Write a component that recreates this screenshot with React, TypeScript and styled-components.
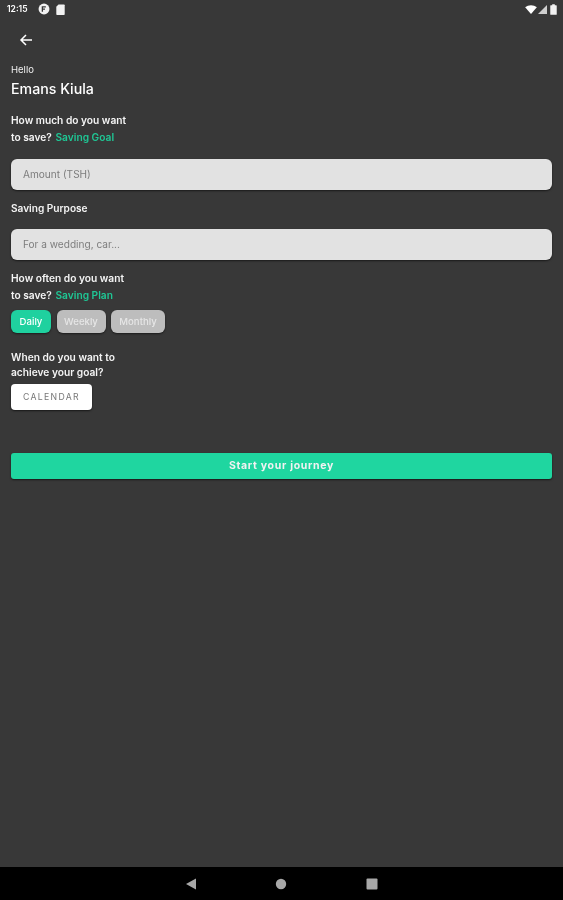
import React from 'react'
import styled, { createGlobalStyle } from 'styled-components'

const GlobalStyle = createGlobalStyle`
  html, body {
    margin: 0;
    padding: 0;
    background: #383838;
  }
  * {
    box-sizing: border-box;
  }
`

const Screen = styled.div`
  width: 563px;
  height: 900px;
  display: flex;
  flex-direction: column;
  background: #383838;
  color: #fff;
  font-family: Inter, "Open Sans", sans-serif;
  overflow: hidden;
  filter: blur(0.45px);
`

const StatusBar = styled.div`
  height: 18px;
  flex: none;
  display: flex;
  align-items: center;
  padding: 0 6px 0 7px;
  gap: 6px;
`

const Clock = styled.span`
  font-size: 8.5px;
  font-weight: 600;
  width: 25px;
`

const StatusRight = styled.div`
  margin-left: auto;
  display: flex;
  align-items: center;
  gap: 1px;
`

const Content = styled.div`
  flex: 1;
  display: flex;
  flex-direction: column;
  padding: 0 11px;
`

const BackButton = styled.button`
  width: 30px;
  height: 30px;
  margin: 7px 0 0 0;
  padding: 0 0 0 8px;
  border: none;
  background: none;
  display: flex;
  align-items: center;
  color: #fff;
`

const Hello = styled.div`
  margin-top: 9px;
  font-size: 9.5px;
  line-height: 12px;
  color: #eee;
`

const Name = styled.div`
  margin-top: 4px;
  font-size: 14.2px;
  line-height: 18px;
  font-weight: 500;
`

const Question = styled.div<{ $top: number; $line?: number }>`
  margin-top: ${(p) => p.$top}px;
  font-size: 10.2px;
  font-weight: 600;
  line-height: ${(p) => p.$line ?? 17}px;
  color: #f4f4f4;
`

const Accent = styled.span`
  margin-left: 1px;
  color: #1fc795;
`

const Field = styled.div<{ $top: number }>`
  margin-top: ${(p) => p.$top}px;
  height: 31px;
  flex: none;
  border-radius: 6px;
  background: #e2e2e2;
  box-shadow: 0 1px 2px rgba(0, 0, 0, 0.55);
  padding: 0 12px 2px;
  display: flex;
  align-items: center;
  font-size: 10.1px;
  color: #7d7d7d;
`

const Label = styled.div`
  margin-top: 12px;
  font-size: 10.1px;
  font-weight: 600;
  line-height: 13px;
  color: #f4f4f4;
`

const PlanRow = styled.div`
  margin-top: 6px;
  display: flex;
  gap: 5.5px;
`

const PlanChip = styled.div<{ $active?: boolean; $width: number }>`
  width: ${(p) => p.$width}px;
  height: 23px;
  border-radius: 6px;
  background: ${(p) => (p.$active ? '#1fd19f' : '#bdbdbd')};
  color: ${(p) => (p.$active ? '#fff' : '#e6e6e6')};
  box-shadow: 0 1px 2px rgba(0, 0, 0, 0.5);
  display: flex;
  align-items: center;
  justify-content: center;
  font-size: 9.6px;
  font-weight: 500;
`

const CalendarButton = styled.div`
  margin-top: 4px;
  width: 81px;
  height: 26px;
  border-radius: 4px;
  background: #fff;
  box-shadow: 0 1px 2px rgba(0, 0, 0, 0.6);
  padding-bottom: 1px;
  display: flex;
  align-items: center;
  justify-content: center;
  font-size: 8.7px;
  letter-spacing: 1.3px;
  color: #777;
`

const StartButton = styled.div`
  margin-top: 43px;
  height: 26px;
  border-radius: 3px;
  background: #1fd6a0;
  box-shadow: 0 1px 2px rgba(0, 0, 0, 0.6);
  padding-bottom: 2px;
  display: flex;
  align-items: center;
  justify-content: center;
  font-size: 10.5px;
  font-weight: 700;
  letter-spacing: 0.7px;
  color: #f2f2f2;
`

const NavBar = styled.div`
  height: 33px;
  flex: none;
  background: #000;
  display: flex;
  align-items: center;
  justify-content: center;
  gap: 78.5px;
  padding-right: 1px;
`

const BackIcon = () => (
  <svg width="14" height="14" viewBox="0 0 14 14" fill="none" stroke="currentColor" strokeWidth="1.5">
    <path d="M13 7H2M7 2L2 7l5 5" />
  </svg>
)

const GlyphIcon = () => (
  <svg width="12" height="12" viewBox="0 0 11 11">
    <circle cx="5.5" cy="5.5" r="5" fill="#f2f2f2" />
    <path d="M4 8V3.5h3.2M4 5.6h2.4" stroke="#383838" strokeWidth="1.2" fill="none" />
  </svg>
)

const SdIcon = () => (
  <svg width="9" height="11" viewBox="0 0 9 11">
    <path d="M2.5 0.5H8a.7.7 0 0 1 .7.7v9a.7.7 0 0 1-.7.7H1a.7.7 0 0 1-.7-.7V2.7z" fill="#f2f2f2" />
  </svg>
)

const WifiIcon = () => (
  <svg width="12" height="9" viewBox="0 0 13 10">
    <path d="M0 2.6C3.6-.6 9.4-.6 13 2.6L6.5 10z" fill="#fff" />
  </svg>
)

const SignalIcon = () => (
  <svg width="9" height="9" viewBox="0 0 10 10">
    <path d="M10 0v10H0z" fill="#cfcfcf" />
  </svg>
)

const BatteryIcon = () => (
  <svg width="7" height="11" viewBox="0 0 8 12" style={{ marginLeft: 2 }}>
    <path d="M2.5 0h3v1.2h1.6a.6.6 0 0 1 .6.6v9.6a.6.6 0 0 1-.6.6H.9a.6.6 0 0 1-.6-.6V1.8a.6.6 0 0 1 .6-.6h1.6z" fill="#f2f2f2" />
  </svg>
)

const NavBack = () => (
  <svg width="12" height="12" viewBox="0 0 12 12">
    <path d="M11 0.5v11L1 6z" fill="#a8a8a8" />
  </svg>
)

const NavHome = () => (
  <svg width="12" height="12" viewBox="0 0 12 12">
    <circle cx="6" cy="6" r="5.2" fill="#a8a8a8" />
  </svg>
)

const NavRecent = () => (
  <svg width="12" height="12" viewBox="0 0 12 12">
    <rect x="0.5" y="0.5" width="11" height="11" rx="1" fill="#a8a8a8" />
  </svg>
)

const App = () => {
  return (
    <Screen>
      <GlobalStyle />
      <StatusBar>
        <Clock>12:15</Clock>
        <GlyphIcon />
        <SdIcon />
        <StatusRight>
          <WifiIcon />
          <SignalIcon />
          <BatteryIcon />
        </StatusRight>
      </StatusBar>
      <Content>
        <BackButton>
          <BackIcon />
        </BackButton>
        <Hello>Hello</Hello>
        <Name>Emans Kiula</Name>
        <Question $top={14}>
          How much do you want
          <br />
          to save? <Accent>Saving Goal</Accent>
        </Question>
        <Field $top={13}>Amount (TSH)</Field>
        <Label>Saving Purpose</Label>
        <Field $top={14}>For a wedding, car...</Field>
        <Question $top={10}>
          How often do you want
          <br />
          to save? <Accent>Saving Plan</Accent>
        </Question>
        <PlanRow>
          <PlanChip $active $width={40}>Daily</PlanChip>
          <PlanChip $width={49}>Weekly</PlanChip>
          <PlanChip $width={54}>Monthly</PlanChip>
        </PlanRow>
        <Question $top={17} $line={15}>
          When do you want to
          <br />
          achieve your goal?
        </Question>
        <CalendarButton>CALENDAR</CalendarButton>
        <StartButton>Start your journey</StartButton>
      </Content>
      <NavBar>
        <NavBack />
        <NavHome />
        <NavRecent />
      </NavBar>
    </Screen>
  )
}

export default App
